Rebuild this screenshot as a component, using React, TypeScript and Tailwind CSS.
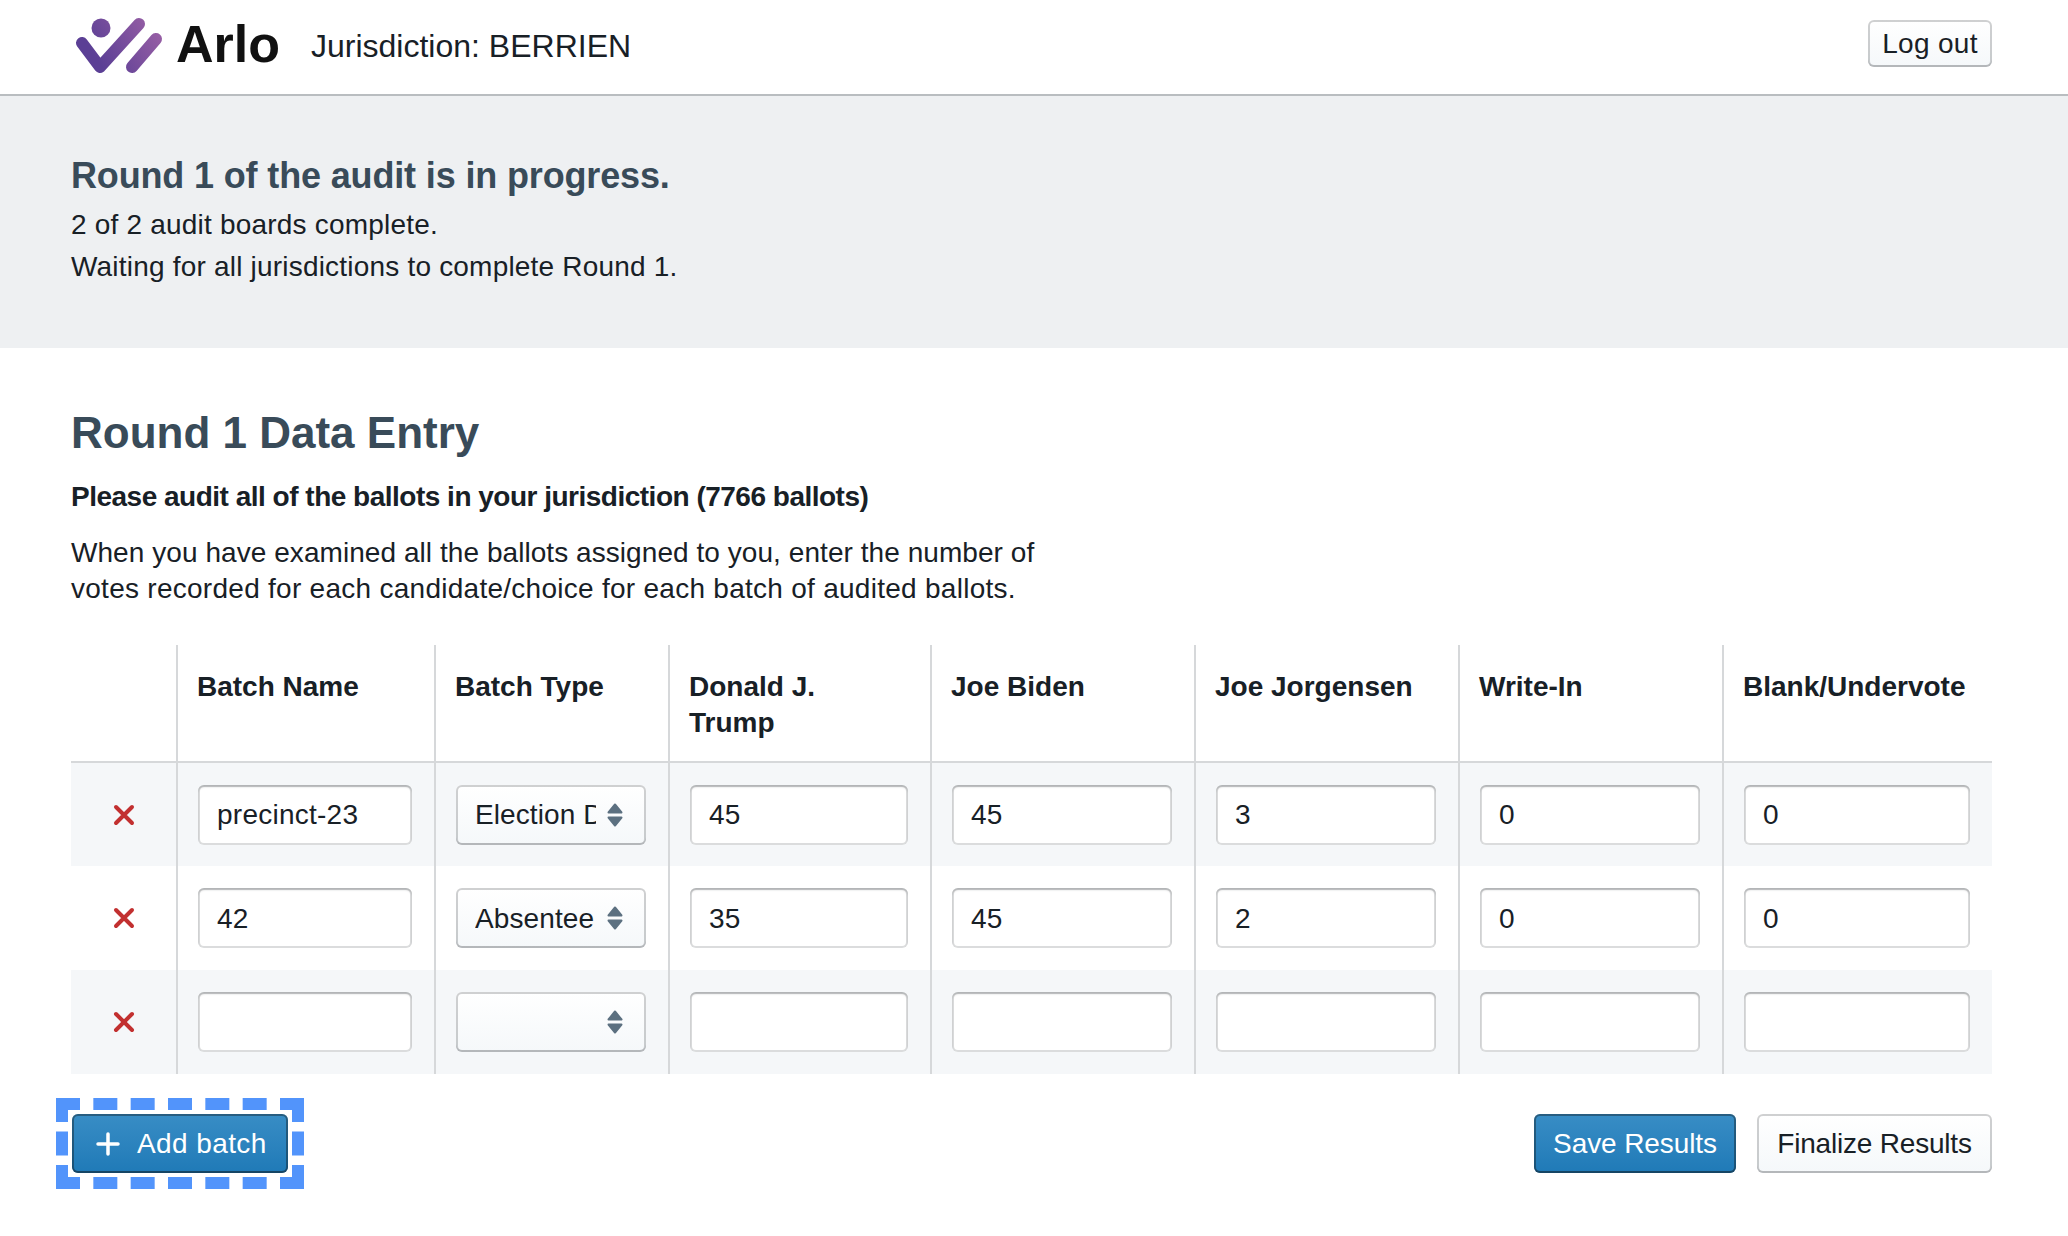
import React from 'react';

const candidates = ['Donald J. Trump', 'Joe Biden', 'Joe Jorgensen', 'Write-In', 'Blank/Undervote'];

const rows = [
  { name: 'precinct-23', type: 'Election Day', votes: ['45', '45', '3', '0', '0'] },
  { name: '42', type: 'Absentee', votes: ['35', '45', '2', '0', '0'] },
  { name: '', type: '', votes: ['', '', '', '', ''] },
];

const inputClass =
  'block w-full h-[60px] px-[19px] pt-px rounded-[6px] bg-white text-[28px] tracking-[0.25px] text-[#182026] outline-none shadow-[inset_0_0_0_2px_rgba(16,22,26,0.15),inset_0_2px_2px_rgba(16,22,26,0.2)]';

const defaultButton =
  'h-[59px] pt-px rounded-[6px] bg-linear-to-b from-white to-[#f5f8fa] text-[28px] text-[#182026] shadow-[inset_0_0_0_2px_rgba(16,22,26,0.2),inset_0_-2px_0_rgba(16,22,26,0.1)]';

const primaryButton =
  'h-[59px] pt-px rounded-[6px] bg-linear-to-b from-[#388dc5] to-[#1f7ab7] text-[28px] text-white shadow-[inset_0_0_0_2px_rgba(16,22,26,0.4),inset_0_-2px_0_rgba(16,22,26,0.2)]';

const Logo = () => (
  <svg width="96" height="62" viewBox="0 0 96 62" fill="none">
    <defs>
      <linearGradient id="logoFill" x1="14" y1="55" x2="90" y2="5" gradientUnits="userSpaceOnUse">
        <stop offset="0.2" stopColor="#5b3f95" />
        <stop offset="1" stopColor="#9c61a6" />
      </linearGradient>
    </defs>
    <g stroke="url(#logoFill)" strokeWidth="12" strokeLinecap="round" strokeLinejoin="round">
      <path d="M13 27L31 51L70 8" />
      <path d="M63 51L87 23" />
    </g>
    <ellipse cx="32" cy="12" rx="9.5" ry="9.5" fill="url(#logoFill)" />
  </svg>
);

const DeleteIcon = () => (
  <svg width="22" height="22" viewBox="0 0 22 22" className="mx-auto" fill="none">
    <path d="M3 3L19 19M19 3L3 19" stroke="#c23030" strokeWidth="4" strokeLinecap="round" />
  </svg>
);

const Carets = () => (
  <svg width="16" height="24" viewBox="0 0 16 24" fill="#5c7080" stroke="#5c7080" strokeWidth="2" strokeLinejoin="round">
    <path d="M8 1.5L14.5 9.5H1.5Z" />
    <path d="M8 22.5L14.5 14.5H1.5Z" />
  </svg>
);

const Select = ({ value }: { value: string }) => (
  <div className="relative">
    <select
      defaultValue={value}
      className="block w-full h-[60px] pl-[19px] pr-[50px] pt-px appearance-none rounded-[6px] bg-linear-to-b from-white to-[#f5f8fa] text-[28px] tracking-[0.1px] text-[#182026] outline-none shadow-[inset_0_0_0_2px_rgba(16,22,26,0.2),inset_0_-2px_0_rgba(16,22,26,0.1)]"
    >
      <option value=""></option>
      <option value="Election Day">Election Day</option>
      <option value="Absentee">Absentee</option>
    </select>
    <span className="absolute right-[23px] top-[18px] pointer-events-none">
      <Carets />
    </span>
  </div>
);

const App = () => {
  return (
    <div className="min-h-[1236px] bg-white text-[#182026] font-['Liberation_Sans',Arial,sans-serif]">
      {/* Header */}
      <header className="h-[96px] flex justify-between pl-[69px] pr-[76px] border-b-2 border-[#b9bdc0]">
        <div className="flex items-center">
          <Logo />
          <span className="ml-[11px] -mt-[6px] text-[52px] leading-none font-bold text-[#111]">Arlo</span>
          <span className="ml-[31px] -mt-[3px] text-[32px] leading-none">Jurisdiction: BERRIEN</span>
        </div>
        <button className={`${defaultButton} w-[124px] !h-[47px] mt-[20px] tracking-[0.3px]`}>Log out</button>
      </header>

      {/* Status */}
      <section className="h-[252px] bg-[#eef0f2] pl-[71px] pt-[59px]">
        <h3 className="text-[36px] leading-[42px] font-bold tracking-[-0.15px] text-[#394b59]">
          Round 1 of the audit is in progress.
        </h3>
        <p className="mt-[7px] text-[28px] leading-[42px] tracking-[0.2px]">2 of 2 audit boards complete.</p>
        <p className="text-[28px] leading-[42px] tracking-[0.2px]">Waiting for all jurisdictions to complete Round 1.</p>
      </section>

      {/* Data entry */}
      <main className="pl-[71px] pr-[76px] pt-[60px]">
        <h2 className="text-[44px] leading-[50px] font-bold text-[#394b59]">Round 1 Data Entry</h2>
        <p className="mt-[21px] text-[28px] leading-[36px] font-bold tracking-[-0.5px]">
          Please audit all of the ballots in your jurisdiction (7766 ballots)
        </p>
        <p className="mt-[20px] text-[28px] leading-[36px]">
          <span className="block tracking-[0.06px]">When you have examined all the ballots assigned to you, enter the number of</span>
          <span className="block tracking-[0.27px]">votes recorded for each candidate/choice for each batch of audited ballots.</span>
        </p>

        <table className="mt-[38px] w-[1921px] table-fixed border-separate border-spacing-0">
          <colgroup>
            <col className="w-[105px]" />
            <col className="w-[258px]" />
            <col className="w-[234px]" />
            <col className="w-[262px]" />
            <col className="w-[264px]" />
            <col className="w-[264px]" />
            <col className="w-[264px]" />
            <col className="w-[270px]" />
          </colgroup>
          <thead>
            <tr>
              <th className="h-[118px] border-b-2 border-[#d6d8da]" />
              {['Batch Name', 'Batch Type', ...candidates].map((title) => (
                <th
                  key={title}
                  className="h-[118px] align-top text-left pl-[19px] pr-[24px] pt-[24px] border-l-2 border-b-2 border-[#d6d8da] text-[28px] leading-[36px] font-bold"
                >
                  {title}
                </th>
              ))}
            </tr>
          </thead>
          <tbody>
            {rows.map((row, i) => (
              <tr key={i} className={i % 2 === 0 ? 'bg-[#f5f7f9]' : 'bg-white'}>
                <td className={`${i === 0 ? 'h-[103px]' : 'h-[104px]'} align-middle`}>
                  <DeleteIcon />
                </td>
                <td className="align-middle pl-[20px] pr-[22px] border-l-2 border-[#d6d8da]">
                  <input readOnly value={row.name} className={inputClass} />
                </td>
                <td className="align-middle pl-[20px] pr-[22px] border-l-2 border-[#d6d8da]">
                  <Select value={row.type} />
                </td>
                {row.votes.map((vote, j) => (
                  <td key={j} className="align-middle pl-[20px] pr-[22px] border-l-2 border-[#d6d8da]">
                    <input readOnly value={vote} className={inputClass} />
                  </td>
                ))}
              </tr>
            ))}
          </tbody>
        </table>

        {/* Actions */}
        <div className="mt-[40px] flex items-center justify-between">
          <div className="relative ml-px">
            <button className={`${primaryButton} w-[216px] flex items-center pl-[24px] tracking-[0.4px]`}>
              <svg width="24" height="24" viewBox="0 0 24 24" fill="none">
                <path d="M12 2V22M2 12H22" stroke="white" strokeWidth="3.5" strokeLinecap="round" />
              </svg>
              <span className="ml-[17px]">Add batch</span>
            </button>
            <div className="absolute -inset-4 border-[12px] border-dashed border-[#5294fb] pointer-events-none" />
          </div>
          <div className="flex items-center gap-[21px]">
            <button className={`${primaryButton} w-[202px] tracking-[-0.1px]`}>Save Results</button>
            <button className={`${defaultButton} w-[235px] tracking-[-0.2px]`}>Finalize Results</button>
          </div>
        </div>
      </main>
    </div>
  );
};

export default App;
